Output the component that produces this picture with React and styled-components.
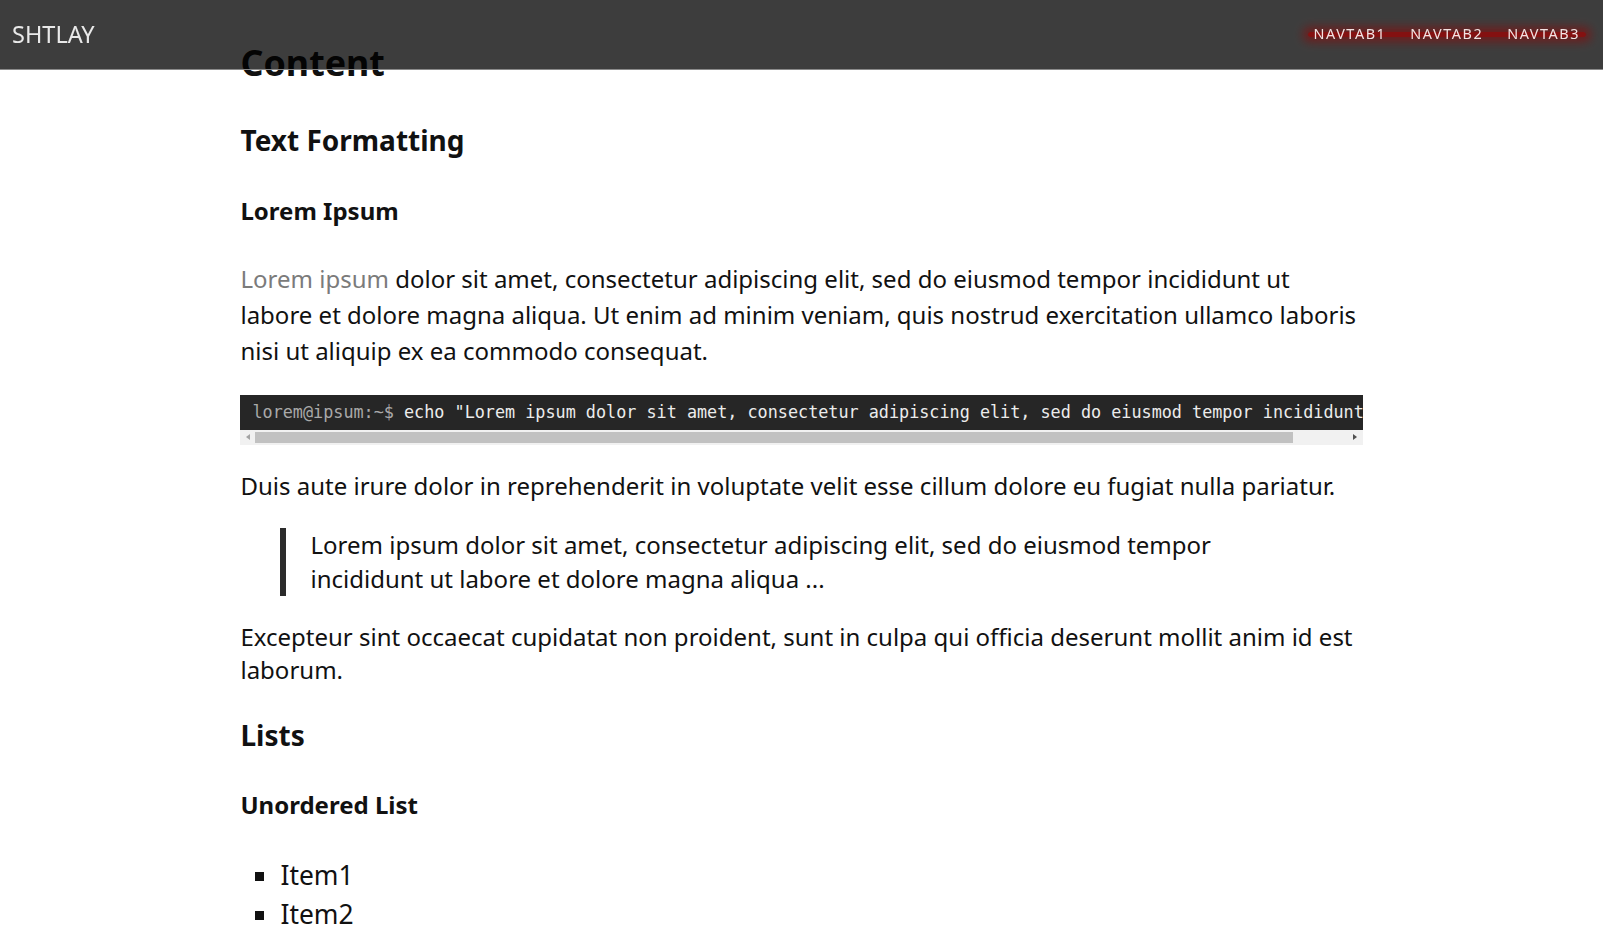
import React from 'react';
import styled, { createGlobalStyle } from 'styled-components';

const GlobalStyle = createGlobalStyle`
  html {
    overflow: hidden;
  }
  body {
    margin: 0;
    background: #fff;
    color: #111;
    font-family: "Noto Sans", "Open Sans", sans-serif;
    font-size: 24px;
  }
`;

const TopBar = styled.header`
  position: fixed;
  top: 0;
  left: 0;
  right: 0;
  height: 69px;
  z-index: 10;
  display: flex;
  align-items: center;
  justify-content: space-between;
  padding: 0 11px 0 12px;
  background: rgba(0, 0, 0, 0.76);
  border-bottom: 1px solid #8a8a8a;
`;

const Logo = styled.div`
  color: #e9e9e9;
  font-size: 23.5px;
  margin-top: -1px;
`;

const Tabs = styled.nav`
  position: relative;
  display: flex;
  margin-top: -2px;

  &::before {
    content: '';
    position: absolute;
    left: 6px;
    right: 6px;
    top: 50%;
    height: 5px;
    margin-top: -2px;
    border-radius: 3px;
    background: rgba(140, 12, 12, 0.9);
    box-shadow: 0 0 10px 5px rgba(135, 12, 12, 0.65);
  }
`;

const Tab = styled.a`
  position: relative;
  padding: 0 12px;
  color: #f1e2e2;
  font-size: 14.4px;
  letter-spacing: 1.55px;
  text-decoration: none;
`;

const Main = styled.main`
  width: 70%;
  margin: 0 auto;
  padding-top: 41px;
`;

const Title = styled.h1`
  margin: 0 0 40px;
  font-size: 35.84px;
  line-height: 43px;
  font-weight: 700;
`;

const SectionTitle = styled.h2`
  margin: 32px 0 39px;
  font-size: 28px;
  line-height: 33.6px;
  font-weight: 700;
`;

const SubTitle = styled.h3`
  margin: 32px 0 36px;
  font-size: 24px;
  line-height: 28.8px;
  font-weight: 700;
`;

const Paragraph = styled.p`
  margin: 24px 0;
  line-height: ${(p) => (p.$tall ? 1.5 : 1.4)};
`;

const Muted = styled.span`
  color: #7b7b7b;
`;

const CodeBlock = styled.div`
  margin: 26px 0 24px;
`;

const Terminal = styled.pre`
  margin: 0;
  padding: 8px 12px;
  background: #262626;
  color: #ececec;
  font-family: "DejaVu Sans Mono", "Liberation Mono", monospace;
  font-size: 16.8px;
  line-height: 18.5px;
  white-space: pre;
  overflow: hidden;
`;

const Prompt = styled.span`
  color: #a9a9a9;
`;

const Scrollbar = styled.div`
  display: flex;
  height: 15px;
  background: #f1f1f1;
`;

const ScrollArrow = styled.div`
  flex: 0 0 15px;
  display: flex;
  align-items: center;
  justify-content: center;

  &::after {
    content: '';
    width: 0;
    height: 0;
    border-top: 3.5px solid transparent;
    border-bottom: 3.5px solid transparent;
    ${(p) =>
      p.$dir === 'left'
        ? `border-right: 4px solid ${p.$active ? '#505050' : '#a3a3a3'};`
        : `border-left: 4px solid ${p.$active ? '#505050' : '#a3a3a3'};`}
  }
`;

const ScrollTrack = styled.div`
  flex: 1;
  display: flex;
  align-items: center;
`;

const ScrollThumb = styled.div`
  height: 11px;
  width: ${(p) => p.$size}%;
  background: #c1c1c1;
`;

const Quote = styled.blockquote`
  margin: 26px 0 22px 40px;
  padding-left: 24px;
  border-left: 6px solid #2b2b2b;
  line-height: 1.4;
`;

const BulletList = styled.ul`
  margin: 0;
  padding-left: 40px;
  list-style: square;
  font-size: 26.4px;
  line-height: 39px;
`;

const App = () => {
  return (
    <>
      <GlobalStyle />
      <TopBar>
        <Logo>SHTLAY</Logo>
        <Tabs>
          <Tab href="#">NAVTAB1</Tab>
          <Tab href="#">NAVTAB2</Tab>
          <Tab href="#">NAVTAB3</Tab>
        </Tabs>
      </TopBar>

      <Main>
        <Title>Content</Title>

        <SectionTitle>Text Formatting</SectionTitle>
        <SubTitle>Lorem Ipsum</SubTitle>
        <Paragraph $tall>
          <Muted>Lorem ipsum</Muted> dolor sit amet, consectetur adipiscing elit, sed do eiusmod tempor
          incididunt ut labore et dolore magna aliqua. Ut enim ad minim veniam, quis nostrud exercitation
          ullamco laboris nisi ut aliquip ex ea commodo consequat.
        </Paragraph>
        <CodeBlock>
          <Terminal>
            <Prompt>lorem@ipsum:~$</Prompt> echo "Lorem ipsum dolor sit amet, consectetur adipiscing elit, sed do eiusmod tempor incididunt ut"
          </Terminal>
          <Scrollbar>
            <ScrollArrow $dir="left" />
            <ScrollTrack>
              <ScrollThumb $size={95} />
            </ScrollTrack>
            <ScrollArrow $dir="right" $active />
          </Scrollbar>
        </CodeBlock>
        <Paragraph>
          Duis aute irure dolor in reprehenderit in voluptate velit esse cillum dolore eu fugiat nulla pariatur.
        </Paragraph>
        <Quote>
          Lorem ipsum dolor sit amet, consectetur adipiscing elit, sed do eiusmod tempor
          <br />
          incididunt ut labore et dolore magna aliqua ...
        </Quote>
        <Paragraph>
          Excepteur sint occaecat cupidatat non proident, sunt in culpa qui officia deserunt mollit anim id est laborum.
        </Paragraph>

        <SectionTitle>Lists</SectionTitle>
        <SubTitle>Unordered List</SubTitle>
        <BulletList>
          <li>Item1</li>
          <li>Item2</li>
          <li>Item3</li>
        </BulletList>
      </Main>
    </>
  );
};

export default App;
